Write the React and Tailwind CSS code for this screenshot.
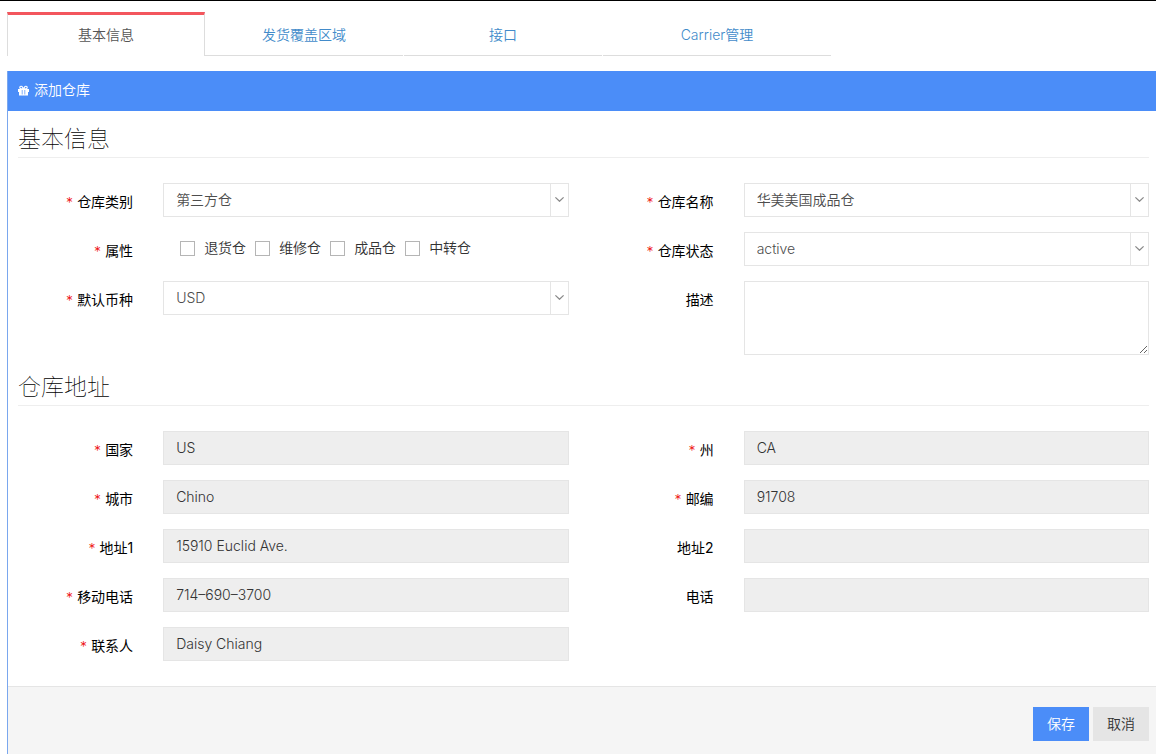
import React, { useState } from 'react';
import clsx from 'clsx';

const tabs = [
  { id: 'basic', label: '基本信息', width: 'w-[198px]' },
  { id: 'area', label: '发货覆盖区域', width: 'w-[198px]' },
  { id: 'api', label: '接口', width: 'w-[198px]' },
  { id: 'carrier', label: 'Carrier管理', width: 'w-[228px]' }
];

const attributes = ['退货仓', '维修仓', '成品仓', '中转仓'];

const address = [
  { id: 'country', label: '国家', value: 'US', required: true },
  { id: 'state', label: '州', value: 'CA', required: true },
  { id: 'city', label: '城市', value: 'Chino', required: true },
  { id: 'zip', label: '邮编', value: '91708', required: true },
  { id: 'address1', label: '地址1', value: '15910 Euclid Ave.', required: true },
  { id: 'address2', label: '地址2', value: '' },
  { id: 'mobile', label: '移动电话', value: '714–690–3700', required: true },
  { id: 'phone', label: '电话', value: '' },
  { id: 'contact', label: '联系人', value: 'Daisy Chiang', required: true }
];

function GiftIcon() {
  return (
    <svg className="mr-[5px] h-[11px] w-[11px]" viewBox="0 0 11 11" fill="none">
      {/* bow */}
      <path
        d="M5.5 4 L4.4 2 C3.8 0.9 1.8 1 1.8 2.5 C1.8 3.5 2.5 3.9 3.4 3.9 Z M5.5 4 L6.6 2 C7.2 0.9 9.2 1 9.2 2.5 C9.2 3.5 8.5 3.9 7.6 3.9 Z"
        stroke="#ffffff"
        strokeWidth="1.2"
      />
      {/* lid and box */}
      <path d="M0 4 H11 V7 H10 V10.5 H1 V7 H0 Z" fill="#ffffff" />
      <path d="M4.2 5 V9.5 M6.8 5 V9.5" stroke="#4b8df8" strokeWidth="0.7" />
    </svg>
  );
}

function SectionTitle({ children }) {
  return (
    <h3 className="mb-[25px] h-9 border-b border-[#eeeeee] text-[23px] leading-[34px] font-thin text-black">
      {children}
    </h3>
  );
}

function Field({ id, label, required, children }) {
  return (
    <div className="mb-[15px] flex items-start">
      <label htmlFor={id} className="w-1/4 px-[15px] pt-[9px] text-right leading-5 font-normal text-black">
        {required && <span className="mr-1 align-middle leading-none font-light text-[#ee1111]">*</span>}
        {label}
      </label>
      <div className="w-3/4 px-[15px]">{children}</div>
    </div>
  );
}

function Select({ id, options }) {
  return (
    <div className="relative">
      <select
        id={id}
        className="block h-[34px] w-full appearance-none border border-[#e5e5e5] bg-white pr-6 pl-3 text-[#4d4d4d] outline-none"
      >
        {options.map((option) => (
          <option key={option}>{option}</option>
        ))}
      </select>
      <span className="pointer-events-none absolute inset-y-0 right-0 flex w-[19px] items-center justify-center border border-[#e5e5e5] pb-px">
        <svg className="h-[5px] w-[9px]" viewBox="0 0 9 5" fill="none" stroke="#888888" strokeWidth="1.2">
          <path d="M0.4 0.4 L4.5 4.3 L8.6 0.4" />
        </svg>
      </span>
    </div>
  );
}

export default function App() {
  const [active, setActive] = useState('basic');

  return (
    <div className="border-t border-black bg-white pt-[11px] pl-[7px] font-['Inter','Noto_Sans_CJK_SC',sans-serif] text-sm font-[350]">
      {/* Tabs */}
      <nav className="flex">
        {tabs.map((tab) => (
          <a
            key={tab.id}
            href={`#${tab.id}`}
            onClick={() => setActive(tab.id)}
            className={clsx(
              'mr-px h-11 text-center leading-10 first:mr-0',
              tab.width,
              active === tab.id
                ? 'border-x border-t-3 border-x-[#dddddd] border-t-[#f3565d] text-[#555555]'
                : 'border-t-3 border-b border-t-transparent border-b-[#dddddd] text-[#428bca]'
            )}
          >
            {tab.label}
          </a>
        ))}
      </nav>

      {/* Warehouse form */}
      <form className="mt-[15px] overflow-hidden border-l border-[#7aa7ee]" onSubmit={(e) => e.preventDefault()}>
        <div className="flex h-10 items-center bg-[#4b8df8] px-[10px] pb-[2px] text-white">
          <GiftIcon />
          添加仓库
        </div>

        <div className="pt-[11px] pr-[7px] pb-[10px] pl-[10px]">
          <SectionTitle>基本信息</SectionTitle>
          <div className="-mx-[15px] grid grid-cols-2">
            <div>
              <Field id="category" label="仓库类别" required>
                <Select id="category" options={['第三方仓']} />
              </Field>
              <Field label="属性" required>
                <div className="flex h-[34px] items-center pb-[2px] pl-[17px]">
                  {attributes.map((name) => (
                    <label key={name} className="mr-[9px] flex items-center gap-[9px] text-[#333333]">
                      <input
                        type="checkbox"
                        className="h-[15px] w-[15px] appearance-none border border-[#b5b5b5] bg-white checked:bg-[#4b8df8]"
                      />
                      {name}
                    </label>
                  ))}
                </div>
              </Field>
              <Field id="currency" label="默认币种" required>
                <Select id="currency" options={['USD']} />
              </Field>
            </div>
            <div>
              <Field id="name" label="仓库名称" required>
                <Select id="name" options={['华美美国成品仓']} />
              </Field>
              <Field id="status" label="仓库状态" required>
                <Select id="status" options={['active']} />
              </Field>
              <Field id="description" label="描述">
                <textarea
                  id="description"
                  className="block h-[74px] w-full resize border border-[#e5e5e5] px-3 py-[6px] text-[#4d4d4d] outline-none"
                />
              </Field>
            </div>
          </div>

          <SectionTitle>仓库地址</SectionTitle>
          <div className="-mx-[15px] grid grid-cols-2">
            {address.map((field) => (
              <Field key={field.id} id={field.id} label={field.label} required={field.required}>
                <input
                  id={field.id}
                  type="text"
                  readOnly
                  value={field.value}
                  className="block h-[34px] w-full border border-[#e5e5e5] bg-[#eeeeee] px-3 pb-[2px] text-[#333333] outline-none"
                />
              </Field>
            ))}
          </div>
        </div>

        <div className="flex justify-end gap-1 border-t border-[#e5e5e5] bg-[#f5f5f5] pt-5 pr-[7px] pb-[13px]">
          <button type="submit" className="h-[34px] bg-[#4b8df8] px-[14px] text-white">
            保存
          </button>
          <button type="button" className="h-[34px] bg-[#e5e5e5] px-[14px] text-[#333333]">
            取消
          </button>
        </div>
      </form>
    </div>
  );
}
